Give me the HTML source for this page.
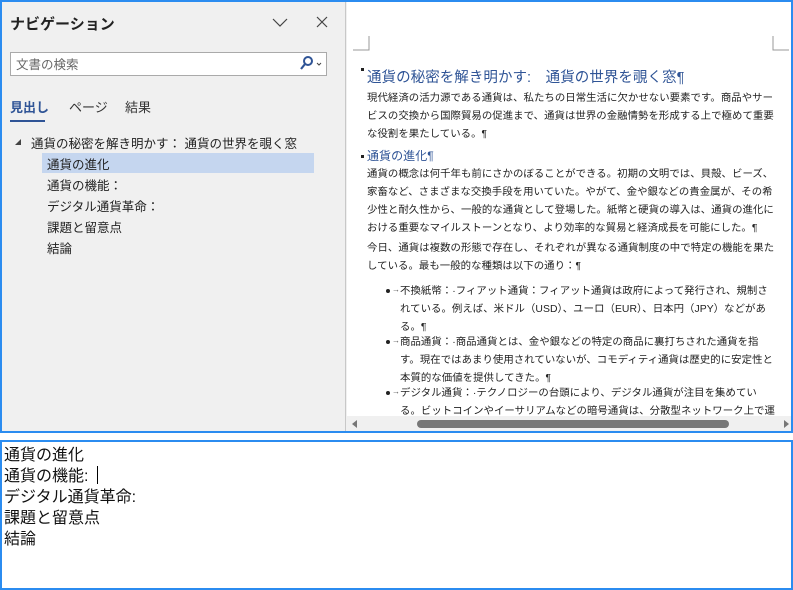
<!DOCTYPE html>
<html><head><meta charset="utf-8"><style>
*{margin:0;padding:0;box-sizing:border-box}
body{width:793px;height:590px;background:#fff;font-family:"Liberation Sans","Noto Sans CJK JP",sans-serif;position:relative;overflow:hidden}
#top{position:absolute;left:0;top:0;width:793px;height:433px;background:#f0f0f0}
.frame{position:absolute;border:2px solid #2b8cf0;pointer-events:none}
#nav{position:absolute;left:0;top:0;width:346px;height:433px;background:#f0f0f0;border-right:1px solid #c8c8c8}
.t{position:absolute;white-space:nowrap}
#doc{position:absolute;left:347px;top:2px;width:444px;height:414px;background:#fff;overflow:hidden;color:#222}
#doc .l{position:absolute;left:20px;font-size:10.4px;white-space:nowrap;letter-spacing:0.05px}
#doc .b{left:53px}
.dot{position:absolute;left:39px;width:4px;height:4px;border-radius:2px;background:#222}
.arr{position:absolute;left:45px;font-size:8px;color:#555}
.h{color:#2f5496}
#sb{position:absolute;left:347px;top:416px;width:444px;height:15px;background:#f0f0f0}
#bot{position:absolute;left:0;top:440px;width:793px;height:150px}
#bot div{position:absolute;left:4px;font-size:16px;color:#111;white-space:nowrap}
</style></head><body>
<div id="top">
<div id="nav">
<div class="t" style="left:10px;top:13px;font-size:15px;font-weight:bold;color:#222">ナビゲーション</div>
<svg class="t" style="left:272px;top:18px" width="16" height="10"><path d="M1 1 L8 8 L15 1" fill="none" stroke="#444" stroke-width="1.2"/></svg>
<svg class="t" style="left:316px;top:16px" width="12" height="12"><path d="M1 1 L11 11 M11 1 L1 11" stroke="#444" stroke-width="1.2"/></svg>
<div class="t" style="left:10px;top:52px;width:317px;height:24px;background:#fff;border:1px solid #aaa"></div>
<div class="t" style="left:16px;top:54px;font-size:12.5px;color:#666">文書の検索</div>
<svg class="t" style="left:299px;top:55px" width="26" height="16"><circle cx="9" cy="6" r="4" fill="none" stroke="#2f5496" stroke-width="2"/><path d="M6 9 L2 14" stroke="#2f5496" stroke-width="2.2"/><path d="M18 8 L20 10 L22 8" fill="none" stroke="#444"/></svg>
<div class="t" style="left:10px;top:97px;font-size:13px;color:#2f5496;font-weight:bold">見出し</div>
<div class="t" style="left:10px;top:120px;width:35px;height:2px;background:#2f5496"></div>
<div class="t" style="left:69px;top:97px;font-size:13px;color:#333">ページ</div>
<div class="t" style="left:125px;top:97px;font-size:13px;color:#333">結果</div>
<svg class="t" style="left:14px;top:138px" width="8" height="8"><path d="M7 1 L7 7 L1 7Z" fill="#444"/></svg>
<div class="t" style="left:31px;top:133px;font-size:12.5px;color:#222">通貨の秘密を解き明かす： 通貨の世界を覗く窓</div>
<div class="t" style="left:42px;top:153px;width:272px;height:20px;background:#c5d6ef"></div>
<div class="t" style="left:47px;top:154px;font-size:12.5px;color:#222">通貨の進化</div>
<div class="t" style="left:47px;top:175px;font-size:12.5px;color:#222">通貨の機能：</div>
<div class="t" style="left:47px;top:196px;font-size:12.5px;color:#222">デジタル通貨革命：</div>
<div class="t" style="left:47px;top:217px;font-size:12.5px;color:#222">課題と留意点</div>
<div class="t" style="left:47px;top:238px;font-size:12.5px;color:#222">結論</div>
</div>
<div id="doc">
<svg class="t" style="left:6px;top:34px" width="440" height="16"><path d="M16 0 V14 H0 M420 0 V14 H436" fill="none" stroke="#999"/></svg>
<div class="t" style="left:14px;top:66px;width:3px;height:3px;background:#222"></div>
<div class="l h" style="top:64px;font-size:14.5px">通貨の秘密を解き明かす:　通貨の世界を覗く窓¶</div>
<div class="l" style="top:87px">現代経済の活力源である通貨は、私たちの日常生活に欠かせない要素です。商品やサー</div>
<div class="l" style="top:105px">ビスの交換から国際貿易の促進まで、通貨は世界の金融情勢を形成する上で極めて重要</div>
<div class="l" style="top:123px">な役割を果たしている。¶</div>
<div class="t" style="left:14px;top:153px;width:3px;height:3px;background:#222"></div>
<div class="l h" style="top:145px;font-size:12px">通貨の進化¶</div>
<div class="l" style="top:163px">通貨の概念は何千年も前にさかのぼることができる。初期の文明では、貝殻、ビーズ、</div>
<div class="l" style="top:181px">家畜など、さまざまな交換手段を用いていた。やがて、金や銀などの貴金属が、その希</div>
<div class="l" style="top:199px">少性と耐久性から、一般的な通貨として登場した。紙幣と硬貨の導入は、通貨の進化に</div>
<div class="l" style="top:217px">おける重要なマイルストーンとなり、より効率的な貿易と経済成長を可能にした。¶</div>
<div class="l" style="top:237px">今日、通貨は複数の形態で存在し、それぞれが異なる通貨制度の中で特定の機能を果た</div>
<div class="l" style="top:255px">している。最も一般的な種類は以下の通り：¶</div>
<div class="dot" style="top:287px"></div><div class="arr" style="top:283px">→</div>
<div class="l b" style="top:280px">不換紙幣：·フィアット通貨：フィアット通貨は政府によって発行され、規制さ</div>
<div class="l b" style="top:298px">れている。例えば、米ドル（USD）、ユーロ（EUR）、日本円（JPY）などがあ</div>
<div class="l b" style="top:316px">る。¶</div>
<div class="dot" style="top:338px"></div><div class="arr" style="top:334px">→</div>
<div class="l b" style="top:331px">商品通貨：·商品通貨とは、金や銀などの特定の商品に裏打ちされた通貨を指</div>
<div class="l b" style="top:349px">す。現在ではあまり使用されていないが、コモディティ通貨は歴史的に安定性と</div>
<div class="l b" style="top:367px">本質的な価値を提供してきた。¶</div>
<div class="dot" style="top:389px"></div><div class="arr" style="top:385px">→</div>
<div class="l b" style="top:382px">デジタル通貨：·テクノロジーの台頭により、デジタル通貨が注目を集めてい</div>
<div class="l b" style="top:400px">る。ビットコインやイーサリアムなどの暗号通貨は、分散型ネットワーク上で運</div>
</div>
<div id="sb">
<svg class="t" style="left:4px;top:4px" width="8" height="8"><path d="M6 0 L1 4 L6 8Z" fill="#777"/></svg>
<div class="t" style="left:70px;top:4px;width:312px;height:8px;border-radius:4px;background:#777"></div>
<svg class="t" style="left:436px;top:4px" width="8" height="8"><path d="M1 0 L6 4 L1 8Z" fill="#777"/></svg>
</div>
</div>
<div class="frame" style="left:0;top:0;width:793px;height:433px"></div>
<div id="bot">
<div style="top:1px">通貨の進化</div>
<div style="top:22px">通貨の機能: <span style="display:inline-block;width:1px;height:18px;background:#000;vertical-align:-3px;margin-left:4px"></span></div>
<div style="top:43px">デジタル通貨革命:</div>
<div style="top:64px">課題と留意点</div>
<div style="top:85px">結論</div>
</div>
<div class="frame" style="left:0;top:440px;width:793px;height:150px"></div>
</body></html>
